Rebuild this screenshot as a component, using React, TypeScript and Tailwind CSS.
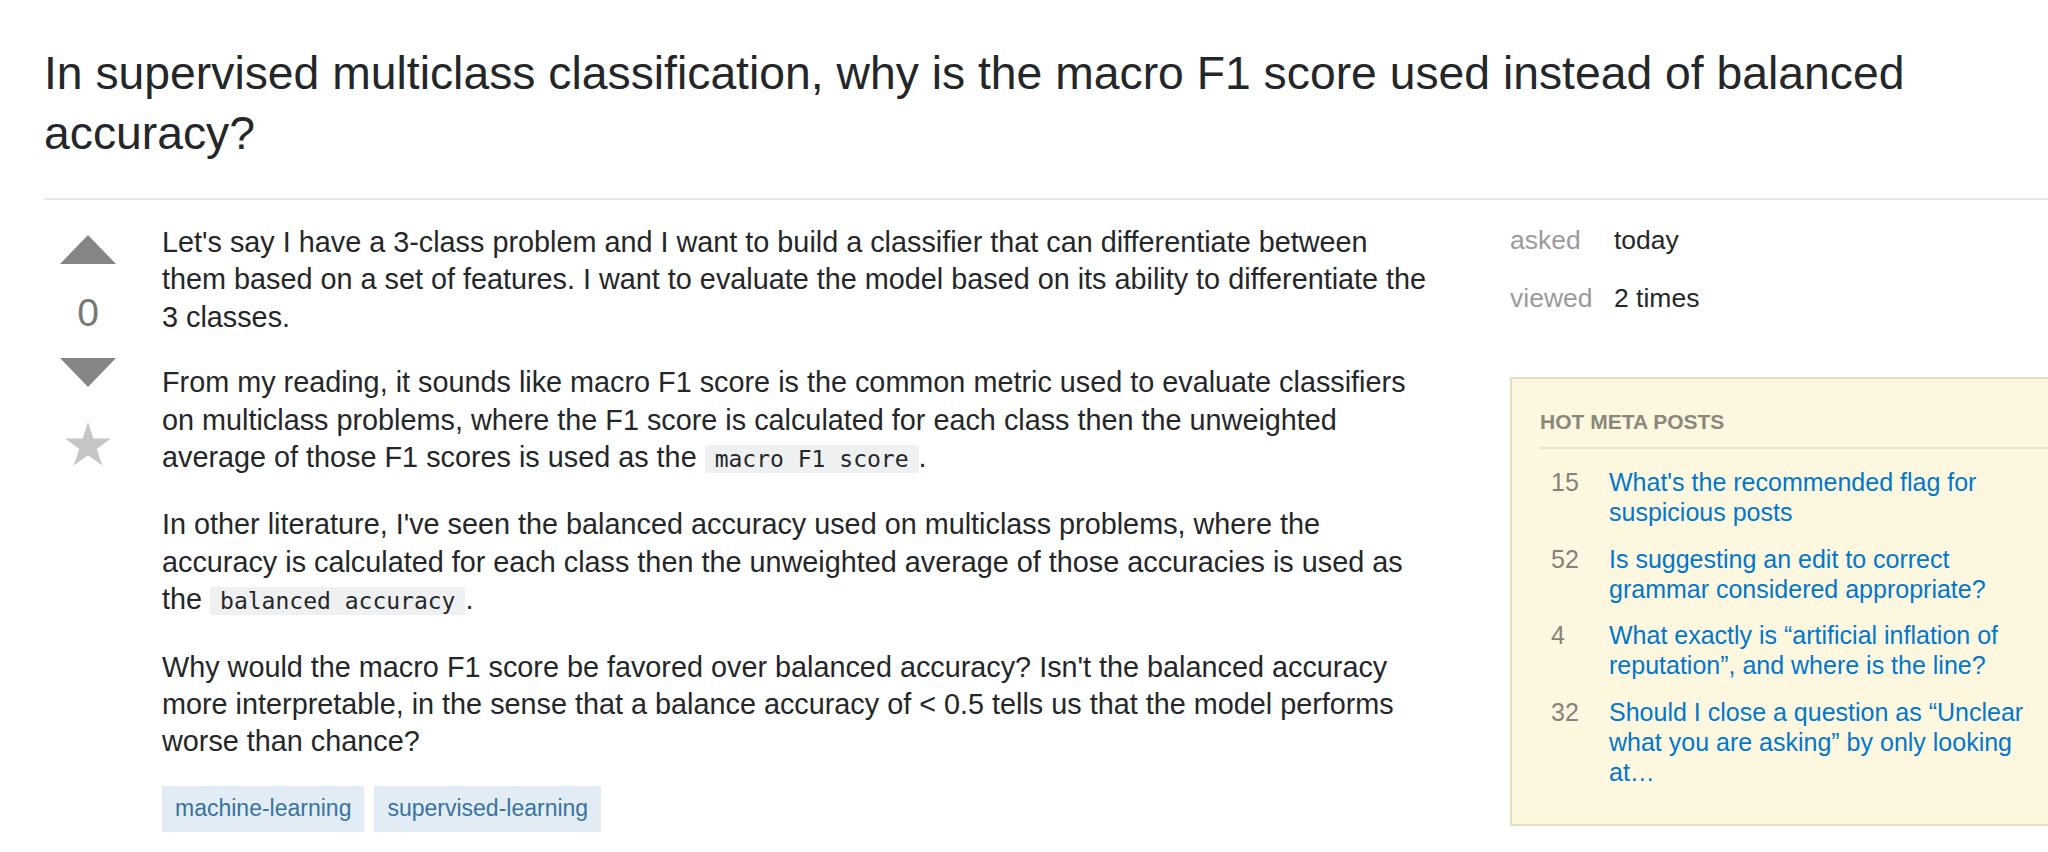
import React from 'react'

const hot = [
  { n: '15', t: "What's the recommended flag for suspicious posts" },
  { n: '52', t: 'Is suggesting an edit to correct grammar considered appropriate?' },
  { n: '4', t: 'What exactly is \u201cartificial inflation of reputation\u201d, and where is the line?' },
  { n: '32', t: 'Should I close a question as \u201cUnclear what you are asking\u201d by only looking at\u2026' },
]

function Code({ children }: { children: React.ReactNode }) {
  return (
    <code className="bg-[#eff0f1] px-[10px] py-[1px] font-['DejaVu_Sans_Mono',monospace] text-[23px] text-[#242729]">
      {children}
    </code>
  )
}

export default function App() {
  return (
    <div className="w-[2048px] h-[852px] overflow-hidden bg-white font-['Liberation_Sans',Arial,sans-serif] text-[#242729]">
      {/* title */}
      <div className="pl-[44px] pt-[43px]">
        <h1 className="text-[46.3px] leading-[60px] font-normal text-[#242729] pb-[35px] border-b-2 border-[#e4e6e8]">
          In supervised multiclass classification, why is the macro F1 score used instead of balanced accuracy?
        </h1>
      </div>

      <div className="flex pl-[44px]">
        {/* main column */}
        <div className="flex w-[1466px] shrink-0">
          {/* vote cell */}
          <div className="w-[88px] shrink-0 flex flex-col items-center pt-[35px]">
            <svg width="56" height="29" viewBox="0 0 56 29">
              <polygon points="28,0 56,29 0,29" fill="#858585" />
            </svg>
            <div className="mt-[29px] text-[39px] leading-[39px] text-[#777]">0</div>
            <svg className="mt-[26px]" width="56" height="29" viewBox="0 0 56 29">
              <polygon points="0,0 56,0 28,29" fill="#858585" />
            </svg>
            <svg className="mt-[35px]" width="46" height="44" viewBox="0 0 46 44">
              <polygon
                points="23,0 28.4,16.6 46,16.6 31.8,26.9 37.2,43.5 23,33.3 8.8,43.5 14.2,26.9 0,16.6 17.6,16.6"
                fill="#c6c6c6"
              />
            </svg>
          </div>

          {/* post text */}
          <div className="ml-[30px] w-[1275px] pt-[24px] text-[28.8px] leading-[37.4px]">
            <p className="mb-[28px]">
              Let's say I have a 3-class problem and I want to build a classifier that can differentiate between them
              based on a set of features. I want to evaluate the model based on its ability to differentiate the 3 classes.
            </p>
            <p className="mb-[28px]">
              From my reading, it sounds like macro F1 score is the common metric used to evaluate classifiers on
              multiclass problems, where the F1 score is calculated for each class then the unweighted average of those F1
              scores is used as the <Code>macro F1 score</Code>.
            </p>
            <p className="mb-[28px]">
              In other literature, I've seen the balanced accuracy used on multiclass problems, where the accuracy is
              calculated for each class then the unweighted average of those accuracies is used as the{' '}
              <Code>balanced accuracy</Code>.
            </p>
            <p>
              Why would the macro F1 score be favored over balanced accuracy? Isn't the balanced accuracy more
              interpretable, in the sense that a balance accuracy of &lt; 0.5 tells us that the model performs worse than
              chance?
            </p>

            {/* tags */}
            <div className="mt-[25px] flex gap-[10px]">
              <span className="h-[46px] px-[13px] flex items-center bg-[#e1ecf4] text-[#39739d] text-[23px]">
                machine-learning
              </span>
              <span className="h-[46px] px-[13px] flex items-center bg-[#e1ecf4] text-[#39739d] text-[23px]">
                supervised-learning
              </span>
            </div>
          </div>
        </div>

        {/* sidebar */}
        <div className="w-[576px] shrink-0 pt-[23px]">
          <div className="flex flex-col gap-[24px] text-[26.5px] leading-[34px]">
            <div className="flex">
              <span className="w-[104px] text-[#9a9a9a]">asked</span>
              <span className="text-[#242729]">today</span>
            </div>
            <div className="flex">
              <span className="w-[104px] text-[#9a9a9a]">viewed</span>
              <span className="text-[#242729]">2 times</span>
            </div>
          </div>

          <div className="mt-[62px] border-2 border-[#e5dfc2] bg-[#fdf7e0] pl-[28px] pt-[30px] pb-[37px]">
            <h4 className="text-[21px] leading-[26px] font-bold text-[#8a877b] pb-[12px] border-b-2 border-[#e8e1c6]">
              HOT META POSTS
            </h4>
            <ul className="mt-[18px] flex flex-col gap-[16.7px]">
              {hot.map((h) => (
                <li key={h.n} className="flex text-[25px] leading-[30px]">
                  <span className="w-[69px] shrink-0 pl-[11px] text-[#858279]">{h.n}</span>
                  <a className="w-[430px] text-[#0077cc]">{h.t}</a>
                </li>
              ))}
            </ul>
          </div>
        </div>
      </div>
    </div>
  )
}
